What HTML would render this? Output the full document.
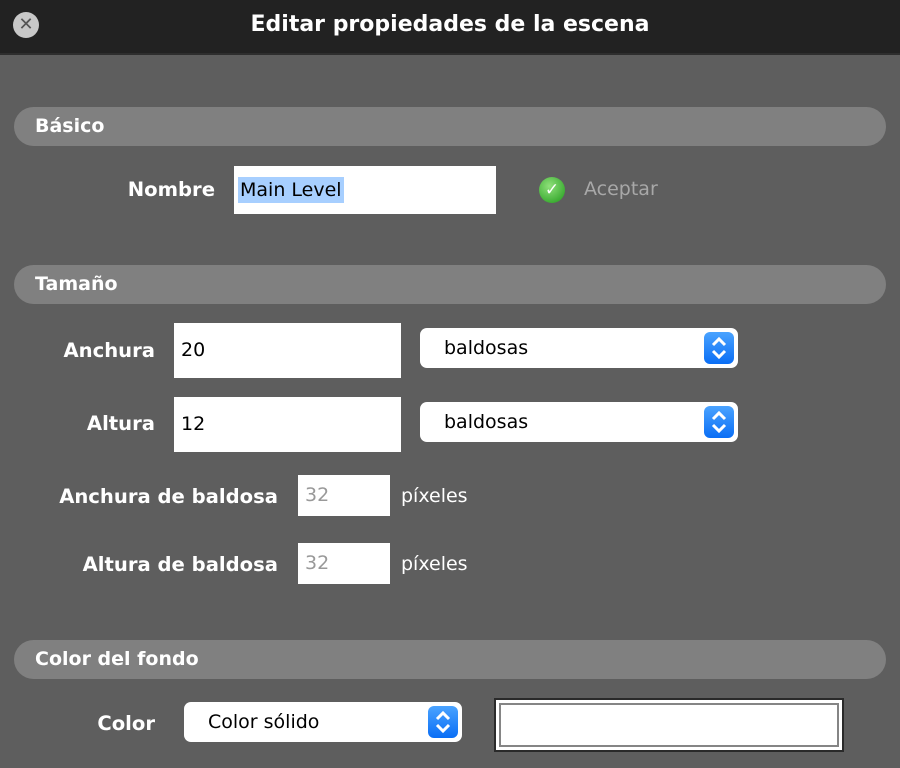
<!DOCTYPE html>
<html><head><style>
body{margin:0;width:900px;height:768px;background:#5e5e5e;font-family:"DejaVu Sans","Liberation Sans",sans-serif;position:relative;overflow:hidden}
.a{position:absolute}
.title{left:0;top:0;width:900px;height:53px;background:#222;border-bottom:2px solid #2e2e2e;color:#fff;font-weight:bold;font-size:22px;text-align:center;line-height:50px}
.sec{left:14px;width:872px;height:39px;background:#808080;border-radius:20px;color:#fff;font-weight:bold;font-size:19px;line-height:39px;box-sizing:border-box;padding-left:21px}
.lbl{color:#fff;font-weight:bold;font-size:19.6px;text-align:right}
.in{background:#fff;font-size:19px;color:#000;box-sizing:border-box;padding-left:7px}
.sel{background:#fff;border-radius:7px;font-size:19px;color:#000;box-sizing:border-box;padding-left:24px}
.arr{position:absolute;right:4px;top:4px;width:30px;height:32px;border-radius:6px;background:linear-gradient(#4aa3ff,#0a6ef5)}
</style></head><body>
<div class="a title">Editar propiedades de la escena</div>
<div class="a" style="left:13px;top:12px;width:26px;height:26px;border-radius:50%;background:#c8c8c8;color:#555;font-weight:bold;font-size:18px;text-align:center;line-height:26px">✕</div>

<div class="a sec" style="top:107px">Básico</div>
<div class="a lbl" style="left:60px;top:178px;width:155px">Nombre</div>
<div class="a in" style="left:234px;top:166px;width:262px;height:48px;line-height:48px;padding-left:4px"><span style="background:#a7cfff;padding:2px 2px">Main Level</span></div>
<div class="a" style="left:539px;top:177px;width:26px;height:26px;border-radius:50%;background:radial-gradient(circle at 40% 35%,#8fe07a,#1f9a1a);color:#fff;font-size:17px;font-weight:bold;text-align:center;line-height:26px">✓</div>
<div class="a" style="left:584px;top:178px;color:#a8a8a8;font-size:19px">Aceptar</div>

<div class="a sec" style="top:265px">Tamaño</div>
<div class="a lbl" style="left:20px;top:339px;width:135px">Anchura</div>
<div class="a in" style="left:174px;top:323px;width:227px;height:55px;line-height:55px">20</div>
<div class="a sel" style="left:420px;top:328px;width:318px;height:40px;line-height:40px">baldosas<div class="arr"><svg width="30" height="32"><path d="M9 13l6-6 6 6M9 19l6 6 6-6" stroke="#fff" stroke-width="3" fill="none"/></svg></div></div>
<div class="a lbl" style="left:20px;top:412px;width:135px">Altura</div>
<div class="a in" style="left:174px;top:397px;width:227px;height:55px;line-height:55px">12</div>
<div class="a sel" style="left:420px;top:402px;width:318px;height:40px;line-height:40px">baldosas<div class="arr"><svg width="30" height="32"><path d="M9 13l6-6 6 6M9 19l6 6 6-6" stroke="#fff" stroke-width="3" fill="none"/></svg></div></div>
<div class="a lbl" style="left:0px;top:485px;width:278px">Anchura de baldosa</div>
<div class="a in" style="left:298px;top:475px;width:92px;height:41px;line-height:41px;color:#999">32</div>
<div class="a" style="left:401px;top:485px;color:#fff;font-size:19px">píxeles</div>
<div class="a lbl" style="left:0px;top:553px;width:278px">Altura de baldosa</div>
<div class="a in" style="left:298px;top:543px;width:92px;height:41px;line-height:41px;color:#999">32</div>
<div class="a" style="left:401px;top:553px;color:#fff;font-size:19px">píxeles</div>

<div class="a sec" style="top:640px">Color del fondo</div>
<div class="a lbl" style="left:20px;top:712px;width:135px">Color</div>
<div class="a sel" style="left:184px;top:702px;width:278px;height:40px;line-height:40px">Color sólido<div class="arr"><svg width="30" height="32"><path d="M9 13l6-6 6 6M9 19l6 6 6-6" stroke="#fff" stroke-width="3" fill="none"/></svg></div></div>
<div class="a" style="left:494px;top:698px;width:350px;height:54px;box-sizing:border-box;border:2px solid #2a2a2a;background:#fff;padding:3px"><div style="height:100%;box-sizing:border-box;border:2px solid #858585"></div></div>
</body></html>
